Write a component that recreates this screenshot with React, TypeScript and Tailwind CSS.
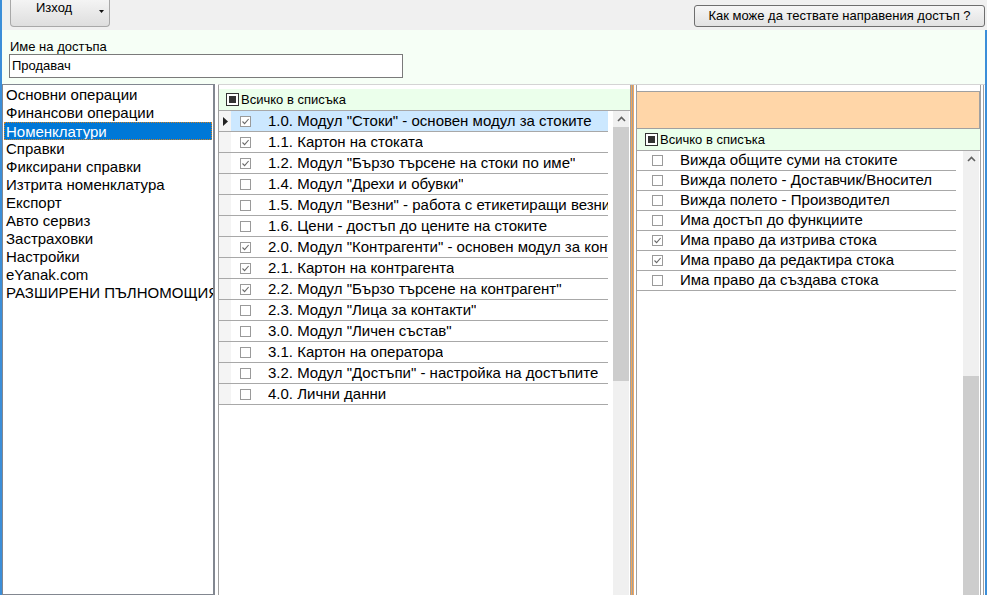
import React from "react";

const sections = [
    "Основни операции",
    "Финансови операции",
    "Номенклатури",
    "Справки",
    "Фиксирани справки",
    "Изтрита номенклатура",
    "Експорт",
    "Авто сервиз",
    "Застраховки",
    "Настройки",
    "eYanak.com",
    "РАЗШИРЕНИ ПЪЛНОМОЩИЯ",
];

const modules = [
    { title: '1.0. Модул "Стоки" - основен модул за стоките', checked: true },
    { title: "1.1. Картон на стоката", checked: true },
    { title: '1.2. Модул "Бързо търсене на стоки по име"', checked: true },
    { title: '1.4. Модул "Дрехи и обувки"', checked: false },
    { title: '1.5. Модул "Везни" - работа с етикетиращи везни', checked: false },
    { title: "1.6. Цени - достъп до цените на стоките", checked: false },
    { title: '2.0. Модул "Контрагенти" - основен модул за контрагентите', checked: true },
    { title: "2.1. Картон на контрагента", checked: true },
    { title: '2.2. Модул "Бързо търсене на контрагент"', checked: true },
    { title: '2.3. Модул "Лица за контакти"', checked: false },
    { title: '3.0. Модул "Личен състав"', checked: false },
    { title: "3.1. Картон на оператора", checked: false },
    { title: '3.2. Модул "Достъпи" - настройка на достъпите', checked: false },
    { title: "4.0. Лични данни", checked: false },
];

const rights = [
    { title: "Вижда общите суми на стоките", checked: false },
    { title: "Вижда полето - Доставчик/Вносител", checked: false },
    { title: "Вижда полето - Производител", checked: false },
    { title: "Има достъп до функциите", checked: false },
    { title: "Има право да изтрива стока", checked: true },
    { title: "Има право да редактира стока", checked: true },
    { title: "Има право да създава стока", checked: false },
];

function CheckBox({ checked }: { checked: boolean }) {
    return (
        <div className="w-[11px] h-[11px] border border-[#9a9a9a] bg-white shrink-0 flex items-center justify-center">
            {checked && (
                <svg width="9" height="9" viewBox="0 0 9 9">
                    <path d="M1.5 4.5 L3.6 6.6 L7.6 2" fill="none" stroke="#6a6a6a" strokeWidth="1.1" />
                </svg>
            )}
        </div>
    );
}

function AllCheck() {
    return (
        <div className="w-[13px] h-[13px] border border-[#333] bg-white p-[2px] shrink-0">
            <div className="w-full h-full bg-[#333]" />
        </div>
    );
}

function ScrollBar({ thumbTop, thumbHeight }: { thumbTop: number; thumbHeight: number | null }) {
    return (
        <div className="w-[16px] h-full bg-[#f0f0f0] relative shrink-0">
            <div className="h-[16px] flex items-center justify-center">
                <svg width="9" height="6" viewBox="0 0 9 6">
                    <path d="M1 5 L4.5 1.5 L8 5" fill="none" stroke="#606060" strokeWidth="1.6" />
                </svg>
            </div>
            <div
                className="absolute left-0 w-full bg-[#cdcdcd]"
                style={thumbHeight === null ? { top: thumbTop, bottom: 0 } : { top: thumbTop, height: thumbHeight }}
            />
        </div>
    );
}

export default function App() {
    return (
        <div className="w-[987px] h-[595px] overflow-hidden bg-[#f0f0f0] border-l-2 border-[#3b8ed8] flex flex-col font-['Liberation_Sans',Arial,sans-serif] text-black">
            {/* toolbar */}
            <div className="h-[30px] shrink-0 flex items-start justify-between pl-[8px]">
                <div className="w-[100px] h-[27px] rounded-b-[4px] border border-t-0 border-[#a8a8a8] bg-gradient-to-b from-[#f4f4f4] to-[#dedede] relative">
                    <span className="absolute left-[25px] top-0 text-[13px] leading-[16px]">Изход</span>
                    <svg className="absolute left-[88px] top-[10px]" width="5" height="3" viewBox="0 0 5 3">
                        <path d="M0 0 H5 L2.5 3 Z" fill="#111" />
                    </svg>
                </div>
                <div className="mt-[5px] mr-[2px] w-[291px] h-[22px] rounded-[3px] border border-[#6e6e6e] bg-gradient-to-b from-[#f6f6f6] to-[#e2e2e2] flex items-center justify-center text-[13px] leading-[16px]">
                    Как може да тествате направения достъп ?
                </div>
            </div>

            <div className="flex-1 flex flex-col border-r-2 border-[#3b8ed8]">
                {/* name */}
                <div className="h-[54px] shrink-0 bg-[#f6fff6] pl-[7px] pt-[9px]">
                    <div className="text-[13px] leading-[15px] pl-[1px]">Име на достъпа</div>
                    <div className="mt-[0px] w-[394px] h-[24px] border border-[#7a7a7a] bg-white flex items-center pl-[2px] text-[13px]">
                        Продавач
                    </div>
                </div>

                {/* main */}
                <div className="flex-1 flex bg-white min-h-0">
                    <div className="w-[213px] h-full border border-r-2 border-[#828790] bg-white pt-[1px] shrink-0">
                        {sections.map((s, i) => (
                            <div
                                key={s}
                                className={
                                    "h-[18px] leading-[18px] text-[15px] whitespace-nowrap overflow-hidden " +
                                    (i === 2
                                        ? "mx-[1px] px-[1px] bg-[#0078d7] text-white border border-dotted border-[#d08020] leading-[16px]"
                                        : "px-[3px]")
                                }
                            >
                                {s}
                            </div>
                        ))}
                    </div>
                    <div className="w-[3px] shrink-0" />

                    <div className="flex-1 flex border-t border-[#d4d4d4] min-w-0">
                        {/* middle panel */}
                        <div className="w-[412px] h-full border-l border-[#a0a0a0] flex flex-col shrink-0">
                            <div className="h-[4px] shrink-0" />
                            <div className="h-[22px] shrink-0 bg-[#ebffeb] border-b border-[#a8a8a8] flex items-center pl-[7px] gap-[2px] text-[13px]">
                                <AllCheck />
                                <span>Всичко в списъка</span>
                            </div>
                            <div className="flex-1 flex min-h-0">
                                <div className="w-[389px] shrink-0">
                                    {modules.map((m, i) => (
                                        <div key={m.title} className="h-[21px] flex border-b border-[#a8a8a8]">
                                            <div className="w-[12px] shrink-0 bg-[#f4f4f4] flex items-center justify-center">
                                                {i === 0 && (
                                                    <svg width="5" height="9" viewBox="0 0 5 9">
                                                        <path d="M0 0 L5 4.5 L0 9 Z" fill="#222" />
                                                    </svg>
                                                )}
                                            </div>
                                            <div
                                                className={
                                                    "flex-1 flex items-center pl-[9px] min-w-0 " +
                                                    (i === 0 ? "bg-[#cce8ff]" : "")
                                                }
                                            >
                                                <CheckBox checked={m.checked} />
                                                <span className="ml-[17px] text-[15px] whitespace-nowrap overflow-hidden">{m.title}</span>
                                            </div>
                                        </div>
                                    ))}
                                </div>
                                <div className="w-[5px] shrink-0" />
                                <ScrollBar thumbTop={16} thumbHeight={254} />
                                <div className="w-[1px] shrink-0" />
                            </div>
                        </div>

                        {/* splitter */}
                        <div className="w-[6px] h-full flex shrink-0">
                            <div className="w-[1px] bg-[#a0a0a0]" />
                            <div className="w-[1px] bg-[#f2a65a]" />
                            <div className="w-[1px] bg-[#a0a0a0]" />
                            <div className="w-[1px] bg-[#f2a65a]" />
                        </div>

                        {/* right panel */}
                        <div className="flex-1 flex h-full min-w-0">
                            <div className="w-[345px] h-full border-x border-[#a0a0a0] flex flex-col shrink-0">
                                <div className="h-[6px] shrink-0" />
                                <div className="h-[38px] shrink-0 border border-[#a0a0a0] bg-[#ffd6a8] -ml-[1px]" />
                                <div className="h-[22px] shrink-0 bg-[#ebffeb] border-b border-[#a8a8a8] flex items-center pl-[8px] gap-[2px] text-[13px]">
                                    <AllCheck />
                                    <span>Всичко в списъка</span>
                                </div>
                                <div className="flex-1 flex min-h-0">
                                    <div className="w-[319px] shrink-0">
                                        {rights.map((r) => (
                                            <div key={r.title} className="h-[20px] flex items-center pl-[15px] border-b border-[#a8a8a8]">
                                                <CheckBox checked={r.checked} />
                                                <span className="ml-[17px] text-[15px] whitespace-nowrap">{r.title}</span>
                                            </div>
                                        ))}
                                    </div>
                                    <div className="w-[7px] shrink-0" />
                                    <ScrollBar thumbTop={225} thumbHeight={null} />
                                </div>
                            </div>
                            <div className="w-[2px] shrink-0" />
                            <div className="w-[1px] bg-[#a0a0a0] shrink-0" />
                        </div>
                    </div>
                </div>
            </div>
        </div>
    );
}
